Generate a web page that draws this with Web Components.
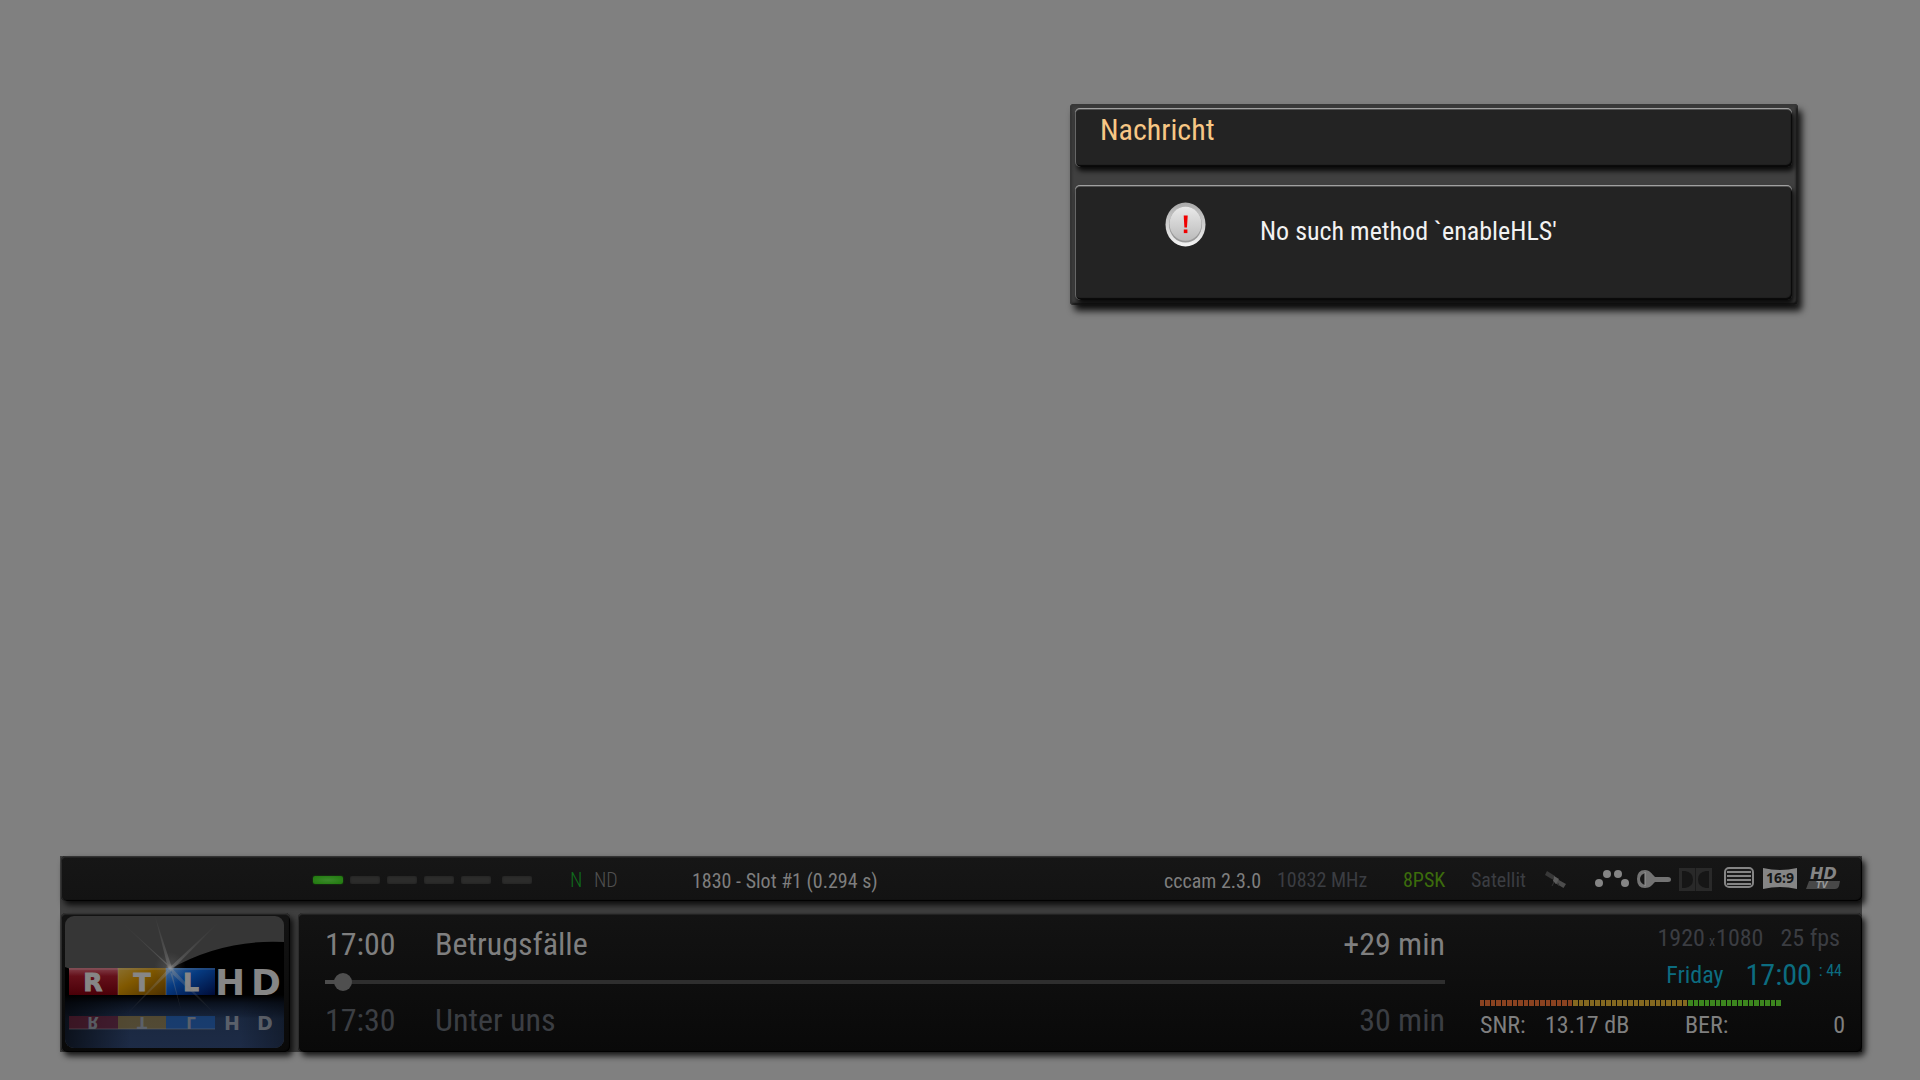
<!DOCTYPE html>
<html lang="de">
<head>
<meta charset="utf-8">
<title>RTL HD</title>
<style>
html,body{margin:0;height:100%}
body{background:#808080;font-family:"Roboto Condensed","Roboto",sans-serif;color:#8c8c8c}
</style>
</head>
<body>
<tv-screen>
  <message-box slot="message" heading="Nachricht">No such method `enableHLS'</message-box>
  <info-bar slot="infobar"></info-bar>
</tv-screen>
<script>
function define(name, html, setup) {
  const template = document.createElement('template');
  template.innerHTML = html;
  customElements.define(name, class extends HTMLElement {
    constructor() {
      super();
      this.attachShadow({mode: 'open'}).append(template.content.cloneNode(true));
    }
    connectedCallback() { if (setup) setup(this, this.shadowRoot); }
  });
}

define('tv-screen', `
<style>
:host{display:flex;flex-direction:column;justify-content:space-between;min-height:100vh;box-sizing:border-box;padding:104px 58px 28px 60px}
.top{display:flex;justify-content:flex-end;padding-right:64px}
</style>
<div class="top"><slot name="message"></slot></div>
<slot name="infobar"></slot>`);

define('bevel-panel', `
<style>
:host{display:block;box-sizing:border-box;border-radius:5px;background:#232323;
 box-shadow:inset 0 1px #a0a0a0,inset 0 2px #505050,inset 1px 0 #666,inset -1px -2px 1px #080808,2px 4px 5px rgba(0,0,0,.85)}
:host([dim]){background:linear-gradient(#161616,#131313);
 box-shadow:inset 0 1px #333,inset 0 2px #222,inset 1px 0 #2b2b2b,inset -1px -1px 1px #000,3px 4px 6px rgba(0,0,0,.85)}
:host([deep]){background:linear-gradient(#131313,#090909)}
</style><slot></slot>`);

define('alert-icon', `
<style>:host{display:block}svg{display:block}</style>
<svg width="41" height="45" viewBox="0 0 41 45" aria-hidden="true">
<defs><linearGradient id="rim" x1="0" y1="0" x2="0" y2="1"><stop offset="0" stop-color="#aaa"/><stop offset="1" stop-color="#f4f4f4"/></linearGradient>
<linearGradient id="face" x1="0" y1="0" x2="0" y2="1"><stop offset="0" stop-color="#e9e9e9"/><stop offset="1" stop-color="#bbb"/></linearGradient></defs>
<ellipse cx="20.500" cy="22.500" rx="20" ry="22" fill="url(#rim)"/>
<ellipse cx="20.500" cy="22.800" rx="16.500" ry="17.800" fill="#999"/>
<ellipse cx="20.500" cy="21.800" rx="16" ry="17" fill="url(#face)"/>
<path d="M18.700 13.500h4l-.7 12h-2.600z" fill="#f00000"/><rect x="18.800" y="27.500" width="3.600" height="3.600" fill="#f00000"/>
</svg>`);

define('message-box', `
<style>
:host{display:flex;flex-direction:column;gap:18px;box-sizing:border-box;width:728px;max-width:100%;padding:4px 6px 5px 5px;border-radius:4px;background:#404040;
 box-shadow:inset 0 3px 3px #383838,inset 2px 0 2px #333,inset -2px -2px 2px #111,4px 6px 7px rgba(0,0,0,.85)}
.head{height:59px;padding:4px 25px}
h1{margin:0;font-weight:400;font-size:30px;line-height:36px;color:#f7c785}
.body{height:115px;padding:17px 28px 0 90px;display:flex;gap:54px}
p{margin:13px 0 0;font-size:26px;line-height:32px;color:#f2f2f2;white-space:nowrap}
</style>
<bevel-panel class="head"><h1></h1></bevel-panel>
<bevel-panel class="body"><alert-icon></alert-icon><p><slot></slot></p></bevel-panel>`,
(el, root) => { root.querySelector('h1').textContent = el.getAttribute('heading'); });

define('tuner-leds', `
<style>
:host{display:flex;gap:7px}
i{width:30px;height:8px;border-radius:2px;background:#2c2c2b;box-shadow:inset 0 0 2px #1c1c1c}
i.on{background:radial-gradient(#3c8a2c,#1f7a0c);box-shadow:0 0 2px #1c5c10}
i:last-child{margin-left:4px}
</style><i class="on"></i><i></i><i></i><i></i><i></i><i></i>`);

define('channel-logo', `
<style>
:host{display:block;padding:3px 6px 4px 4px}
svg{display:block;border-radius:9px}
text{font-family:"DejaVu Sans",sans-serif;font-weight:700;fill:#868686}
</style>
<svg width="219" height="132" viewBox="0 0 219 132" role="img" aria-label="RTL HD">
<defs>
<linearGradient id="floor" x1="0" y1="0" x2="0" y2="1"><stop offset="0" stop-color="#000"/><stop offset=".15" stop-color="#0a111e"/><stop offset=".45" stop-color="#1a2840"/><stop offset="1" stop-color="#1d2b46"/></linearGradient>
<linearGradient id="side"><stop offset="0" stop-color="#000" stop-opacity=".6"/><stop offset=".3" stop-color="#000" stop-opacity="0"/><stop offset=".8" stop-color="#000" stop-opacity="0"/><stop offset="1" stop-color="#000" stop-opacity=".3"/></linearGradient>
<linearGradient id="r" x1="0" y1="0" x2="0" y2="1"><stop offset="0" stop-color="#82404a"/><stop offset=".3" stop-color="#65101a"/><stop offset="1" stop-color="#4a0008"/></linearGradient>
<linearGradient id="y" x1="0" y1="0" x2="1" y2="1"><stop offset="0" stop-color="#8a7030"/><stop offset=".4" stop-color="#805800"/><stop offset="1" stop-color="#4c3000"/></linearGradient>
<linearGradient id="b" x1="0" y1="0" x2="1" y2="1"><stop offset="0" stop-color="#3064a0"/><stop offset=".4" stop-color="#063a80"/><stop offset="1" stop-color="#000c38"/></linearGradient>
<radialGradient id="glow"><stop offset="0" stop-color="#aaa" stop-opacity=".7"/><stop offset=".3" stop-color="#888" stop-opacity=".2"/><stop offset="1" stop-color="#777" stop-opacity="0"/></radialGradient>
<radialGradient id="ray" gradientUnits="userSpaceOnUse" cx="105" cy="52" r="70"><stop offset="0" stop-color="#999" stop-opacity=".4"/><stop offset=".45" stop-color="#777" stop-opacity=".25"/><stop offset="1" stop-color="#555" stop-opacity="0"/></radialGradient>
</defs>
<rect width="219" height="132" fill="#363636"/>
<path d="M0 51Q4 53 8 53H105Q158 23 219 26V90H0z" fill="#000"/>
<rect y="79" width="219" height="53" fill="url(#floor)"/><rect y="79" width="219" height="53" fill="url(#side)"/>
<g>
<rect x="4" y="52" width="49" height="27" fill="url(#r)"/><rect x="53" y="52" width="48" height="27" fill="url(#y)"/><rect x="101" y="52" width="49" height="27" fill="url(#b)"/>
<path d="M4 53H150M53 52v27M101 52v27" stroke="#888" stroke-opacity=".4" fill="none"/>
<g font-size="25" text-anchor="middle" style="stroke:#868686;stroke-width:1px"><text x="28" y="75">R</text><text x="77" y="75">T</text><text x="126" y="75">L</text></g>
<g font-size="36"><text x="150" y="79">H</text><text x="186" y="79">D</text></g>
</g>
<g opacity=".6">
<rect x="4" y="100" width="49" height="13" fill="#5a1828"/><rect x="53" y="100" width="48" height="13" fill="#77602c"/><rect x="101" y="100" width="49" height="13" fill="#184a8c"/>
<path d="M4 113H150" stroke="#999" stroke-opacity=".5"/>
<g transform="translate(0 200) scale(1 -1)"><g font-size="15" text-anchor="middle"><text x="28" y="99">R</text><text x="77" y="99">T</text><text x="126" y="99">L</text></g>
<g font-size="19"><text x="159" y="100">H</text><text x="192" y="100">D</text></g></g>
</g>
<g fill="url(#ray)"><path d="M106 53L50 0l57 52zM103 53L160 0l-53 54zM103 52L90 0l17 52zM104 52L60 100l47-46zM105 50l47 50-49-46zM104 52l12 42-10-42z"/></g>
<circle cx="105" cy="52" r="16" fill="url(#glow)"/>
</svg>`);

define('status-icons', `
<style>
:host{display:flex;align-items:center}
svg{display:block;overflow:visible}
.sat{margin-right:28px}.dots{margin-right:8px}.key{margin-right:8px}.dolby{margin-right:12px}.txt{margin-right:9px}.wide{margin-right:9px}
text{font-family:"Noto Sans",sans-serif;font-weight:700}
.hd text{font-family:"DejaVu Sans",sans-serif;font-style:italic}
</style>
<svg class="sat" width="22" height="24" viewBox="0 0 22 24"><path d="M2 3l8 5-2.500 3.500L0 7z" fill="#383838"/><path d="M12 11l9 5-2.500 4L10 15z" fill="#4c4c4c"/><path d="M9 8l5 3-3 5-3-3z" fill="#5c5c5c"/><path d="M9 14l-2 4M13 15l1 3" stroke="#333"/></svg>
<svg class="dots" width="34" height="24" viewBox="0 0 34 24" fill="#858585"><circle cx="4" cy="15" r="4"/><circle cx="12" cy="6" r="4"/><circle cx="23" cy="6" r="4"/><circle cx="30" cy="15" r="4"/></svg>
<svg class="key" width="34" height="24" viewBox="0 0 34 24"><path d="M8 2C13 2 15 6 18 9h13q3 0 3 2.500T31 14H18c-3 3-5 6-10 6Q0 20 0 11T8 2z" fill="#737373"/><path d="M8 5v12Q3 15 3 11t5-6z" fill="#161616"/><path d="M8 4v14" stroke="#999"/></svg>
<svg class="dolby" width="33" height="24" viewBox="0 0 33 24"><path d="M0 0h33v23H0z" fill="#292929"/><path d="M3 3h3q8 1 8 8.500T6 20H3zM30 3h-3q-8 1-8 8.500T27 20h3z" fill="#161616"/><path d="M16.500 0v23" stroke="#1b1b1b"/></svg>
<svg class="txt" width="30" height="24" viewBox="0 0 30 24"><rect x="1" y="0" width="28" height="19" rx="4" fill="#191919" stroke="#858585" stroke-width="2"/><path d="M3 4h24M3 8h24M3 12h24M3 16h24" stroke="#858585" stroke-width="2"/></svg>
<svg class="wide" width="34" height="24" viewBox="0 0 34 24"><path d="M0 0q17 4 34 0v21q-17-4-34 0z" fill="#858585"/><text x="17" y="15" font-size="14" text-anchor="middle" fill="#161616">16:9</text></svg>
<svg class="hd" width="34" height="24" viewBox="0 0 34 24"><path d="M3 13h31l-1 5q-1 3-4 3H0z" fill="#484848"/><text x="4" y="11" font-size="16" fill="#858585">HD</text><text x="10" y="20" font-size="8" fill="#999">TV</text></svg>`);

define('status-strip', `
<style>
:host{display:flex;align-items:center;height:45px;font-size:20px;line-height:24px;white-space:nowrap;box-sizing:border-box;padding:2px 22px 0 252px}
.n{margin-left:38px;width:24px;color:#106c1c;font-weight:300}
.nd{width:98px;color:#505050;font-weight:300}
.lit{color:#7e7e7e}
.slot{flex:1;padding-top:2px}
.cam{width:113px;padding-top:2px}.freq{width:126px;color:#3b3d42}.mod{width:68px;color:#3c6c0c}.src{width:74px;color:#3b3d42}
</style>
<tuner-leds></tuner-leds><span class="n">N</span><span class="nd">ND</span>
<span class="lit slot">1830 - Slot #1 (0.294 s)</span>
<span class="lit cam">cccam 2.3.0</span><span class="freq">10832 MHz</span><span class="mod">8PSK</span><span class="src">Satellit</span>
<status-icons></status-icons>`);

define('epg-rows', `
<style>
:host{display:flex;flex-direction:column;gap:10px;font-size:32px;line-height:38px;color:#7f7f7f;white-space:nowrap}
.row{display:flex}
.time{width:110px}.title{flex:1}
.next{color:#3b3e43}
input{appearance:none;display:block;width:100%;height:18px;margin:0;background:linear-gradient(#4d4d4d,#4d4d4d) 0 50%/18px 4px no-repeat,linear-gradient(#2e2e2e,#2e2e2e) 0 50%/100% 4px no-repeat}
input::-webkit-slider-thumb{appearance:none;width:18px;height:18px;border-radius:50%;background:#4f4f4f}
</style>
<div class="row"><span class="time">17:00</span><span class="title">Betrugsfälle</span><span>+29 min</span></div>
<input type="range" min="0" max="1000" value="8" aria-label="Fortschritt">
<div class="row next"><span class="time">17:30</span><span class="title">Unter uns</span><span>30 min</span></div>`);

define('snr-meter', `
<style>
:host{display:flex;gap:1px;width:301px;height:6px}
i{flex:1;background:#8a4220}
i:nth-child(n+19){background:#846820}
i:nth-child(n+40){background:#3c861e}
</style>`, (el, root) => {
  for (let n = 0; n < 55; n++) root.append(document.createElement('i'));
});

define('signal-info', `
<style>
:host{display:flex;flex-direction:column;font-size:24px;line-height:26px;white-space:nowrap}
.video,.clock{display:flex;justify-content:flex-end;padding-right:5px}
.video{color:#3b3d42;align-items:baseline}
.video small{font-size:14px;padding:0 1px 0 4px}
.fps{margin-left:17px}
.clock{margin:3px 0 7px;color:#0c6c80;line-height:36px;align-items:center;padding-right:3px}
.clock b{font-weight:400;font-size:30px;margin:0 7px 0 22px}
.clock small{font-size:16px;line-height:28px;align-self:flex-start}
.levels{display:flex;margin-top:6px;color:#7f7f7f}
.snr{width:65px}.db{width:140px}.ber{flex:1}
</style>
<div class="video"><span>1920</span><small>x</small><span>1080</span><span class="fps">25 fps</span></div>
<div class="clock"><span>Friday</span><b>17:00</b><small>: 44</small></div>
<snr-meter></snr-meter>
<div class="levels"><span class="snr">SNR:</span><span class="db">13.17 dB</span><span class="ber">BER:</span><span>0</span></div>`);

define('info-bar', `
<style>
:host{display:grid;grid-template-columns:229px 1fr;gap:12px 8px;padding-left:1px;background:#404040}
status-strip{width:100%}
.strip{grid-column:1/-1}
.main{display:flex;gap:35px;padding:12px 17px 13px 27px}
epg-rows{flex:1;min-width:0}
signal-info{flex:0 0 365px}
</style>
<bevel-panel class="strip" dim><status-strip></status-strip></bevel-panel>
<bevel-panel dim deep><channel-logo></channel-logo></bevel-panel>
<bevel-panel class="main" dim deep><epg-rows></epg-rows><signal-info></signal-info></bevel-panel>`);
</script>
</body>
</html>
